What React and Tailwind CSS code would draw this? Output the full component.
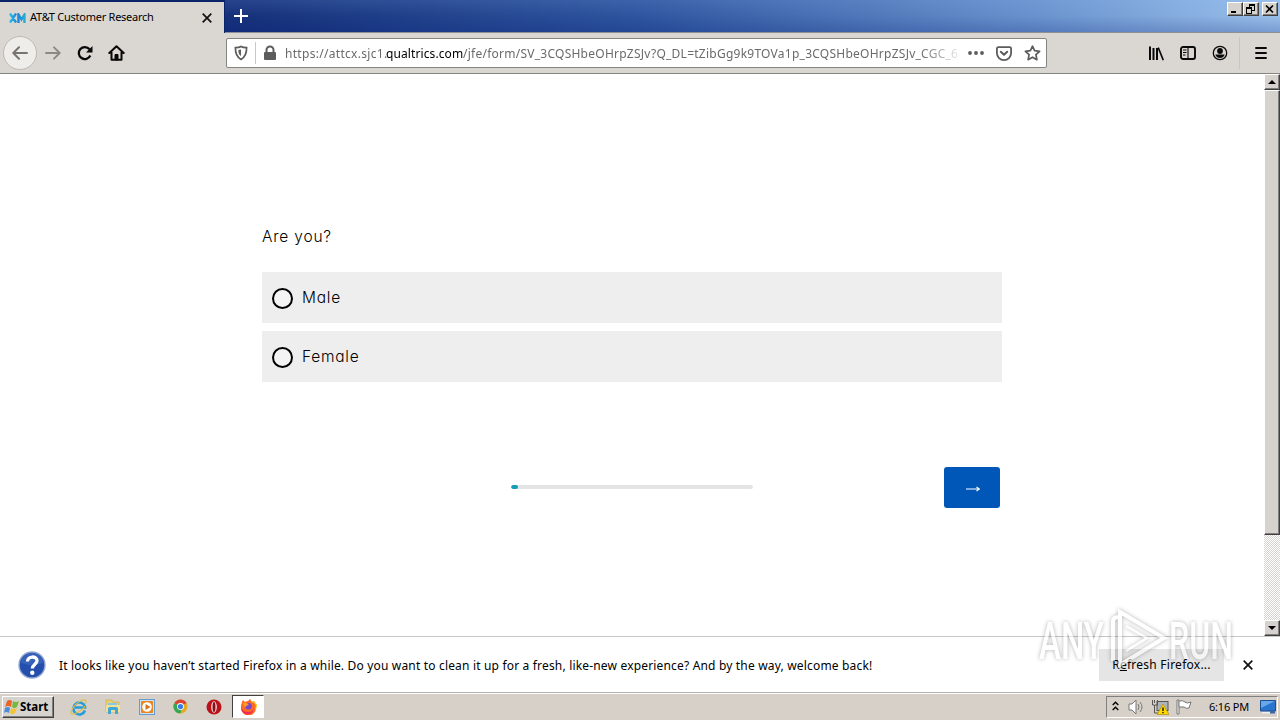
import React, { useState } from 'react'
import clsx from 'clsx'

const OPTIONS = ['Male', 'Female']

const RAISED = 'border border-t-white border-l-white border-r-[#404040] border-b-[#404040] bg-[#d6d3ce] shadow-[inset_-1px_-1px_0_#808080]'

function CloseIcon({ size = 10, className }) {
  return (
    <svg width={size} height={size} viewBox="0 0 10 10" className={className} stroke="#111" strokeWidth="1.7">
      <path d="M.7.7l8.6 8.6M9.3.7L.7 9.3" />
    </svg>
  )
}

function WindowButton({ children, className }) {
  return (
    <button className={clsx('flex h-[14px] w-4 items-center justify-center', RAISED, className)}>
      <svg width="12" height="11" viewBox="0 0 12 11" fill="none" stroke="#000" shapeRendering="crispEdges">{children}</svg>
    </button>
  )
}

function TabBar() {
  return (
    <div className="flex h-[33px] border-b border-[#8f9095] bg-[linear-gradient(180deg,rgba(160,200,255,.12),transparent_50%,rgba(0,20,110,.2)),linear-gradient(90deg,#0c2471_0%,#17337d_20%,#2e559f_50%,#6790cc_80%,#98bfea_100%)]">
      <div className="flex h-[33px] w-[225px] shrink-0 items-center border-t-2 border-r border-[#0a246a] bg-[#dad7d2] pl-[9px]">
        <svg width="17" height="10" viewBox="0 0 17 10" className="shrink-0" fill="none" strokeWidth="2.4">
          <defs>
            <linearGradient id="xm" gradientUnits="userSpaceOnUse" x1="0" x2="17" y1="0" y2="0">
              <stop offset="0" stopColor="#25c5e8" />
              <stop offset=".5" stopColor="#1c80da" />
              <stop offset="1" stopColor="#28b6d0" />
            </linearGradient>
          </defs>
          <path stroke="url(#xm)" d="M1 .5l6 9M7 .5l-6 9M9.500 10v-8.500l3 5 3-5v8.500" />
        </svg>
        <span className="ml-1 w-[126px] shrink-0 whitespace-nowrap font-['Noto_Sans'] text-[11px] tracking-[-0.25px] text-black">AT&amp;T Customer Research</span>
        <CloseIcon className="ml-[46px] shrink-0" />
      </div>
      <svg width="14" height="14" viewBox="0 0 14 14" className="mt-[9px] ml-[9px] shrink-0" stroke="#fff" strokeWidth="2">
        <path d="M7 0v14M0 7h14" />
      </svg>
      <div className="flex flex-1 justify-end pt-[2px] pr-[2px]">
        <WindowButton><path d="M2 8.500h5M2 7.500h5" /></WindowButton>
        <WindowButton><path d="M4 1.500h6M4 .5h6M9.500 1v5M4.500 1v2M7 6.500h3M1.500 4v5M1 9.500h6M6.500 9v-5M1 4.500h6M1 3.500h6" /></WindowButton>
        <WindowButton className="ml-[3px]"><path strokeWidth="1.700" shapeRendering="auto" d="M2 1.500l7 7M9 1.500l-7 7" /></WindowButton>
      </div>
    </div>
  )
}

function UrlBar() {
  return (
    <div className="ml-[100px] flex h-[30px] w-[821px] shrink-0 items-center rounded-[2px] border border-[#85857f] bg-white pl-[7px]">
      <svg width="14" height="16" viewBox="0 0 14 16" className="shrink-0" fill="none" stroke="#5c5c5c" strokeWidth="1.700">
        <path d="M7 1.500C5.500 2.500 3.500 2.600 1.400 2.600C1.300 8 2 12 7 14.400C12 12 12.700 8 12.600 2.600C10.500 2.600 8.500 2.500 7 1.500z" />
        <path d="M7 4.500v6.500C4.800 9.800 4.500 8 4.400 5z" fill="#5c5c5c" stroke="none" />
      </svg>
      <div className="ml-[7px] h-[22px] w-px shrink-0 bg-[#c8c8c8]" />
      <svg width="14" height="16" viewBox="0 0 14 16" className="ml-[7px] shrink-0">
        <path d="M3.500 8V5a3.500 3.500 0 0 1 7 0v3" fill="none" stroke="#5c5c5c" strokeWidth="2" />
        <rect x="1" y="7" width="12" height="8" rx="1" fill="#5c5c5c" />
      </svg>
      <div className="mt-[2px] ml-[8px] w-[674px] shrink-0 overflow-hidden whitespace-nowrap font-['Noto_Sans'] text-[12px] tracking-[0.25px] text-[#6a6a6a] [mask-image:linear-gradient(to_right,black_635px,transparent_680px)]">
        <span className="inline-block w-[101px] tracking-[0.3px]">https://attcx.sjc1.</span>
        <span className="inline-block w-[77px] tracking-[0.1px] text-black">qualtrics.com</span>
        <span>/jfe/form/SV_3CQSHbeOHrpZSJv?Q_DL=tZibGg9k9TOVa1p_3CQSHbeOHrpZSJv_CGC_6</span>
      </div>
      <svg width="16" height="4" viewBox="0 0 16 4" className="ml-[9px] shrink-0" fill="#5c5c5c">
        <circle cx="2" cy="2" r="1.900" /><circle cx="8" cy="2" r="1.900" /><circle cx="14" cy="2" r="1.900" />
      </svg>
      <svg width="16" height="15" viewBox="0 0 16 15" className="ml-[12px] shrink-0" fill="none" stroke="#5c5c5c" strokeWidth="1.800" strokeLinecap="round" strokeLinejoin="round">
        <path d="M2.200 1.200h11.600a1.300 1.300 0 0 1 1.300 1.300v4.500a7.100 7.100 0 0 1-14.200 0V2.500a1.300 1.300 0 0 1 1.300-1.300z" />
        <path d="M4.800 5.700L8 8.700l3.200-3" strokeWidth="2" />
      </svg>
      <svg width="17" height="16" viewBox="0 0 17 16" className="ml-[12px] shrink-0" fill="none" stroke="#5c5c5c" strokeWidth="1.700" strokeLinejoin="round">
        <path d="M8.500 1.200l2.100 4.500 5 .6-3.700 3.400 1 5-4.400-2.500-4.400 2.500 1-5L1.400 6.300l5-.6z" />
      </svg>
    </div>
  )
}

function NavBar() {
  return (
    <div className="flex h-[41px] shrink-0 items-center border-b border-[#85857f] bg-[#dad7d2] pl-[3px]">
      <div className="flex h-[34px] w-[34px] shrink-0 items-center justify-center rounded-full border border-[#bdbab5] bg-[#efedea]">
        <svg width="16" height="14" viewBox="0 0 16 14" fill="none" stroke="#777572" strokeWidth="2" strokeLinecap="round" strokeLinejoin="round">
          <path d="M15 7H1.500M7 1.300L1.300 7 7 12.700" />
        </svg>
      </div>
      <svg width="16" height="14" viewBox="0 0 16 14" className="ml-[8px] shrink-0" fill="none" stroke="#8b8986" strokeWidth="1.900" strokeLinecap="round" strokeLinejoin="round">
        <path d="M1 7h13.500M9 1.300L14.700 7 9 12.700" />
      </svg>
      <svg width="16" height="16" viewBox="0 0 16 16" className="ml-[16px] shrink-0" fill="none" stroke="#090909" strokeWidth="2.300">
        <path d="M13.300 10.500A6 6 0 1 1 12.500 4.300" />
        <path d="M15.500 1v6.500H9z" fill="#090909" stroke="none" />
      </svg>
      <svg width="17" height="16" viewBox="0 0 17 16" className="ml-[15px] shrink-0" fill="none" stroke="#090909" strokeWidth="2" strokeLinejoin="round" strokeLinecap="round">
        <path d="M1.300 8L8.500 1.200 15.700 8M3.500 7.500v7.300h10V7.500" />
        <path d="M7 14.500v-5h3v5z" fill="#090909" strokeWidth="1" />
      </svg>
      <div className="w-px shrink-0" />
      <UrlBar />
      <svg width="16" height="16" viewBox="0 0 16 16" className="ml-[101px] shrink-0" fill="none" stroke="#090909" strokeWidth="2">
        <path d="M2 1.500v13.500M5.500 3v12M9 3v12" /><path d="M10.500 3.200L15 14.500" strokeLinecap="round" strokeWidth="1.700" />
      </svg>
      <svg width="16" height="14" viewBox="0 0 16 14" className="ml-[16px] shrink-0" fill="none" stroke="#090909" strokeWidth="1.900">
        <rect x="1" y="1" width="14" height="12" rx="2" />
        <path d="M8 1v12M3 4h3.500M3 6.500h3.500M3 9h2.500" strokeWidth="1.100" />
      </svg>
      <svg width="16" height="16" viewBox="0 0 16 16" className="ml-[16px] shrink-0">
        <circle cx="8" cy="8" r="6.700" fill="none" stroke="#090909" strokeWidth="1.300" />
        <circle cx="8" cy="6" r="2.900" fill="#090909" />
        <path d="M3.300 9.500h9.400C12 12 10 13 8 13s-4-1-4.700-3.500z" fill="#090909" />
      </svg>
      <div className="ml-[11px] h-8 w-px bg-[#c9c6c1]" />
      <svg width="12" height="12" viewBox="0 0 12 12" className="ml-[15px] shrink-0" stroke="#090909" strokeWidth="1.900" strokeLinecap="round">
        <path d="M1 1h10M1 6h10M1 11h10" />
      </svg>
    </div>
  )
}

function ScrollButton({ d }) {
  return (
    <div className={clsx('flex h-4 w-4 shrink-0 items-center justify-center', RAISED)}>
      <svg width="8" height="4" viewBox="0 0 8 4"><path d={d} /></svg>
    </div>
  )
}

function Survey() {
  const [answer, setAnswer] = useState(null)

  return (
    <main className="flex-1 pl-[262px] font-['Inter'] text-[15.500px] font-light text-black">
      <h1 className="mt-[151px] h-6 tracking-[0.8px] leading-6 [font-feature-settings:'cv11']">Are you?</h1>
      <div className="mt-[23px] flex w-[740px] flex-col gap-2">
        {OPTIONS.map(option => (
          <button
            key={option}
            onClick={() => setAnswer(option)}
            className="flex h-[51px] items-center bg-[#eee] pl-[10px] text-left"
          >
            <span className="mt-[2px] flex h-[21px] w-[21px] items-center justify-center rounded-full border-2 border-black bg-[#f4f4f4]">
              {answer === option && <span className="h-2.5 w-2.5 rounded-full bg-black" />}
            </span>
            <span className="ml-[9px] tracking-[0.75px] [font-feature-settings:'cv11']">{option}</span>
          </button>
        ))}
      </div>
      <div className="mt-[85px] flex h-[41px] w-[738px] items-center justify-between pl-[249px]">
        <div className="mb-px h-1 w-[242px] overflow-hidden rounded-full bg-[#e4e4e4]">
          <div className="h-1 w-[7px] rounded-full bg-[#129dba]" />
        </div>
        <button className="flex h-[41px] w-14 items-center justify-center rounded-[3px] bg-[#0057b8]">
          <svg width="14" height="6" viewBox="0 0 14 6" className="mt-[3px] ml-px" fill="none" stroke="#fff" strokeWidth="1.100">
            <path d="M0 3h13.500M10.500 1L13.500 3l-3 2" />
          </svg>
        </button>
      </div>
    </main>
  )
}

function Notification() {
  return (
    <div className="flex h-[56px] shrink-0 items-center border-t border-[#c7c7c7] bg-white pl-[18px] font-['Noto_Sans'] text-[12px] text-black">
      <svg width="28" height="28" viewBox="0 0 28 28" className="shrink-0">
        <circle cx="14" cy="14" r="13" fill="#244fac" stroke="#91a8d3" strokeWidth="1.400" />
        <path d="M3 12a11 10 0 0 1 22 0q-11 4-22 0z" fill="#456fc2" opacity=".6" />
        <path d="M9.500 10.500c0-6 9.500-5.700 9.500-.7 0 3.700-4.700 3.700-4.700 7.700" fill="none" stroke="#fff" strokeWidth="3.300" />
        <circle cx="14.300" cy="21.700" r="2.200" fill="#fff" />
      </svg>
      <span className="mt-[2px] ml-[13px] w-[816px] shrink-0 whitespace-nowrap tracking-[0.175px]">It looks like you haven’t started Firefox in a while. Do you want to clean it up for a fresh, like-new experience? And by the way, welcome back!</span>
      <button className="ml-[224px] h-8 w-[125px] shrink-0 whitespace-nowrap bg-[#e5e5e5] tracking-[0.25px]">R<u>e</u>fresh Firefox...</button>
      <CloseIcon className="ml-[19px] shrink-0" />
    </div>
  )
}

function TaskIcons() {
  return (
    <div className="flex items-center">
      <svg width="18" height="18" viewBox="0 0 18 18" className="ml-[16px]" fill="none">
        <path d="M15 12.500A6 6 0 1 1 15 8.500v1H5" stroke="#259cdb" strokeWidth="2.600" />
        <path d="M15 8c-2 4-12 10-14 7.500C0 13 6 4 13 2c3-.8 4 1 2 4" stroke="#e0bd3e" strokeWidth="1.200" />
      </svg>
      <svg width="16" height="16" viewBox="0 0 16 16" className="ml-[17px]">
        <path d="M1 3V1h6l1 2h6v10H1z" fill="#edcf70" stroke="#c4a44d" strokeWidth=".6" />
        <path d="M3 4h9v5H3z" fill="#83c9e9" /><path d="M1 6h14v7H1z" fill="#f3df95" />
        <path d="M3 15V9.500q0-1.500 2-1.500h6q2 0 2 1.500V15h-3v-4H6v4z" fill="#3fa8d7" />
      </svg>
      <svg width="16" height="16" viewBox="0 0 16 16" className="ml-[18px]">
        <rect x=".5" y=".5" width="15" height="15" fill="#cfe0f0" stroke="#629ed3" />
        <rect x="2" y="2" width="12" height="12" rx="1" fill="#ed861c" />
        <circle cx="8" cy="8" r="4.800" fill="#fff" /><path d="M6.500 5l5 3-5 3z" fill="#dc721a" />
      </svg>
      <svg width="15" height="15" viewBox="0 0 16 16" className="ml-[18px]">
        <circle cx="8" cy="8" r="7.500" fill="#e3ac23" />
        <path d="M8 8L1.500 4.200A7.500 7.500 0 0 1 14.500 4.200z" fill="#d94334" />
        <path d="M1.500 4.200A7.500 7.500 0 0 0 8 15.500L9.500 9z" fill="#36a852" />
        <circle cx="8" cy="8" r="3.700" fill="#fff" /><circle cx="8" cy="8" r="2.800" fill="#3a7ee4" />
      </svg>
      <svg width="16" height="16" viewBox="0 0 16 16" className="ml-[18px]">
        <circle cx="8" cy="8" r="7.500" fill="#bd1119" /><ellipse cx="8" cy="8" rx="2.800" ry="5.800" fill="#eee" /><ellipse cx="8" cy="8" rx="1.500" ry="5" fill="#8e0c12" />
      </svg>
      <div className="ml-[10px] flex h-[23px] w-8 items-center justify-center border border-t-[#404040] border-l-[#404040] border-r-white border-b-white bg-white">
        <svg width="17" height="17" viewBox="0 0 17 17">
          <path d="M2 4l1-2 2 2q2-1 3-1l2-2 2 3 2-1q3 4 2 7a7 7 0 0 1-15 0Q1 6 2 4z" fill="#ff6a22" />
          <path d="M10 1q1 3 4 4t1 7q3-3 2-6-2 0-2-3-1 1-2 1z" fill="#ffd13c" />
          <path d="M1 8q1 6 7 6 5 0 6-5-1 8-7 7.500T1 8z" fill="#f52b56" />
          <circle cx="8.500" cy="8.300" r="3.300" fill="#7547d0" /><path d="M3 5q4-1 6 2-3 0-3 2-3-1-3-4z" fill="#ff9a25" />
        </svg>
      </div>
    </div>
  )
}

function Taskbar() {
  return (
    <div className="flex h-7 shrink-0 items-center border-t border-[#b4b1ac] bg-[#d6d0c8] pl-[2px] text-[11px] text-black shadow-[inset_0_1px_0_#fff]">
      <button className={clsx('flex h-[22px] w-[52px] items-center pl-px', RAISED)}>
        <svg width="16" height="16" viewBox="0 0 16 16" className="shrink-0">
          <path d="M3 2q3-2 5 0L7 8Q4 6 1 8z" fill="#e9632b" />
          <path d="M9 2q3 2 6 0l-2 6q-3 2-5 0z" fill="#78b83c" />
          <path d="M1 9q3-2 5 0l-1 5q-3-2-5 0z" fill="#4a8ddb" />
          <path d="M7 9q3 2 6 0l-2 5q-3 2-5 0z" fill="#f3c331" />
        </svg>
        <span className="font-['Noto_Sans'] text-[11.500px] font-bold">Start</span>
      </button>
      <TaskIcons />
      <div className="mt-px ml-auto mr-[2px] flex h-[22px] w-[172px] items-center border border-t-[#808080] border-l-[#808080] border-r-white border-b-white pl-[5px]">
        <svg width="7" height="10" viewBox="0 0 7 10" fill="none" stroke="#000" strokeWidth="1.400" className="-mt-[2px]">
          <path d="M.7 4l2.800-2.800L6.300 4M.7 9l2.800-2.800L6.300 9" />
        </svg>
        <svg width="18" height="16" viewBox="0 0 18 16" className="ml-[9px]" fill="#fff" stroke="#777" strokeWidth="1">
          <path d="M1 5h3l4-4v14l-4-4H1z" /><path d="M10 5q2 3 0 6M12 3q4 5 0 10" fill="none" />
        </svg>
        <svg width="17" height="16" viewBox="0 0 17 16" className="ml-[6px]">
          <rect x="5" y="2.500" width="11" height="9" fill="#aeb5ba" stroke="#555" />
          <path d="M.5 1v5h2v8H7M2.500 1v3M5.500 1v5H3" fill="none" stroke="#555" />
          <path d="M11 5l6 10.500H5z" fill="#ffd900" stroke="#a98300" strokeWidth=".6" /><path d="M11 8.500v3.500M11 13v1.200" stroke="#000" strokeWidth="1.300" />
        </svg>
        <svg width="17" height="16" viewBox="0 0 17 16" className="ml-[7px]" fill="#fff" stroke="#777">
          <path d="M1 1h2v14H1z" /><path d="M3 2q4-1 6 1t6 0l-2 6q-3 1-5-1H3z" />
        </svg>
        <span className="ml-4 w-[42px] whitespace-nowrap font-['Noto_Sans'] text-[11px] tracking-[-0.2px]">6:16 PM</span>
        <svg width="16" height="14" viewBox="0 0 16 14" className="ml-[9px]">
          <path d="M.5.500h15v10.500H.5z" fill="#2874cf" stroke="#1c4f91" /><path d="M1 1h14L1 8z" fill="#69a8e8" />
          <path d="M2 12h8v1.500H2z" fill="#eee" /><path d="M10 11h5v2.500h-5z" fill="#4067a0" />
        </svg>
      </div>
    </div>
  )
}

function Watermark() {
  return (
    <svg width="204" height="74" viewBox="0 0 204 74" className="pointer-events-none absolute top-[604px] left-[1034px] opacity-60 drop-shadow-[0_0_2px_rgba(0,0,0,.5)]">
      <g fill="#fff" fontFamily="Roboto" fontSize="51" fontWeight="500">
        <text x="5" y="55" textLength="65" lengthAdjust="spacingAndGlyphs">ANY</text>
        <text x="135" y="55" textLength="64" lengthAdjust="spacingAndGlyphs">RUN</text>
      </g>
      <g fill="none" stroke="#fff" strokeWidth="4">
        <path d="M86 8l44 26-44 27z" />
        <path d="M92 22l21 12-21 13" strokeWidth="2.500" />
        <path d="M79 57V17q0-4 6-4" />
      </g>
    </svg>
  )
}

export default function App() {
  return (
    <div className="relative flex h-[720px] w-[1280px] flex-col overflow-hidden bg-white">
      <TabBar />
      <NavBar />
      <div className="flex min-h-0 flex-1">
        <Survey />
        <div className="flex w-4 flex-col bg-[repeating-conic-gradient(#d6d3ce_0_25%,#fff_0_50%)] bg-[length:2px_2px]">
          <ScrollButton d="M4 0l4 4H0z" />
          <div className={clsx('h-[445px]', RAISED)} />
          <div className="flex-1" />
          <ScrollButton d="M0 0h8L4 4z" />
        </div>
      </div>
      <Notification />
      <Taskbar />
      <Watermark />
    </div>
  )
}
